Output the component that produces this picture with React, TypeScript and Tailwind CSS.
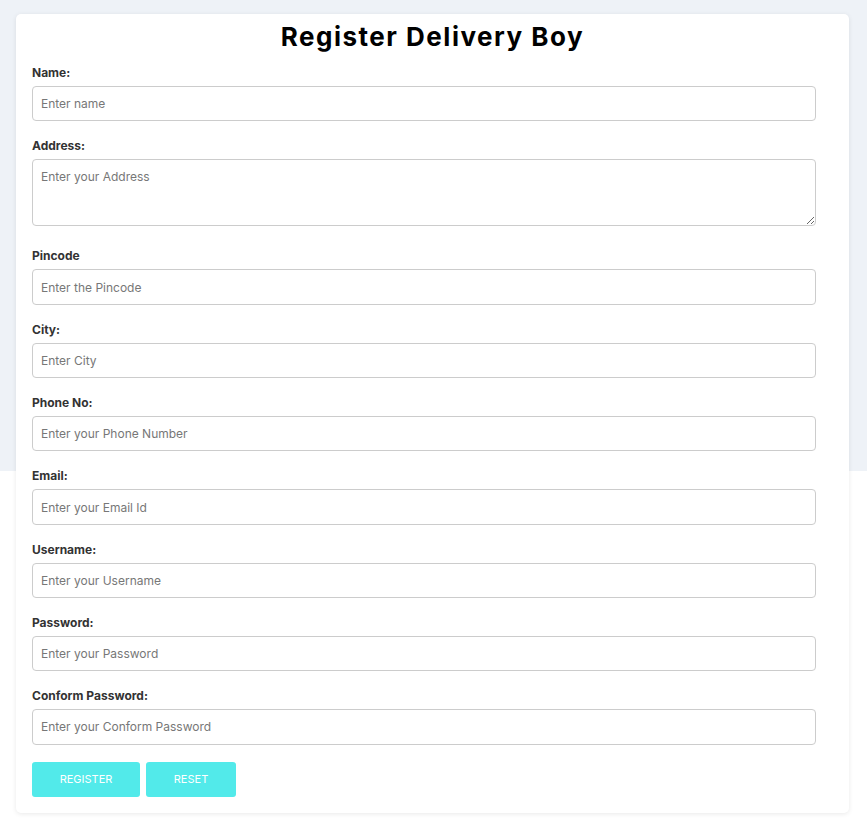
import React from "react";

const fields: { label: string; placeholder: string; type?: string; area?: boolean }[] = [
  { label: "Name:", placeholder: "Enter name" },
  { label: "Address:", placeholder: "Enter your Address", area: true },
  { label: "Pincode", placeholder: "Enter the Pincode" },
  { label: "City:", placeholder: "Enter City" },
  { label: "Phone No:", placeholder: "Enter your Phone Number" },
  { label: "Email:", placeholder: "Enter your Email Id" },
  { label: "Username:", placeholder: "Enter your Username" },
  { label: "Password:", placeholder: "Enter your Password", type: "password" },
  { label: "Conform Password:", placeholder: "Enter your Conform Password", type: "password" },
];

export default function App() {
  return (
    <div
      className="min-h-[832px] w-full bg-[linear-gradient(to_bottom,#eef2f7_471px,#ffffff_471px)] pt-[14px] pl-[16px] pr-[18px] pb-[19px]"
      style={{ fontFamily: "Inter, 'Open Sans', sans-serif" }}
    >
      <div className="bg-white rounded-[5px] shadow-[0_1px_5px_rgba(0,0,0,0.09)] pl-[16px] pr-[33px] pt-[6px] pb-[16px] flex flex-col">
        <h1 className="text-center text-[26px] leading-[34px] font-bold tracking-[1.5px] text-black mb-[10px] -mr-[17px]">
          Register Delivery Boy
        </h1>
        {fields.map((f) => (
          <div key={f.label} className="flex flex-col">
            <label className="text-[12px] leading-[18px] font-bold text-[#333] mb-[4px]">{f.label}</label>
            {f.area ? (
              <textarea
                placeholder={f.placeholder}
                className="block h-[67px] border border-[#cccccc] rounded-[4px] px-[8px] py-[8px] text-[12px] leading-[18px] text-[#333] placeholder:text-[#777] outline-none mb-[21.2px]"
              />
            ) : (
              <input
                type={f.type ?? "text"}
                placeholder={f.placeholder}
                className="block h-[35.3px] border border-[#cccccc] rounded-[4px] px-[8px] text-[12px] text-[#333] placeholder:text-[#777] outline-none mb-[16px]"
              />
            )}
          </div>
        ))}
        <div className="flex gap-[6px] mt-[1px]">
          <button className="w-[108px] h-[35px] bg-[#52eaea] text-white text-[11px] uppercase rounded-[3px]">
            Register
          </button>
          <button className="w-[90px] h-[35px] bg-[#52eaea] text-white text-[11px] uppercase rounded-[3px]">
            Reset
          </button>
        </div>
      </div>
    </div>
  );
}
